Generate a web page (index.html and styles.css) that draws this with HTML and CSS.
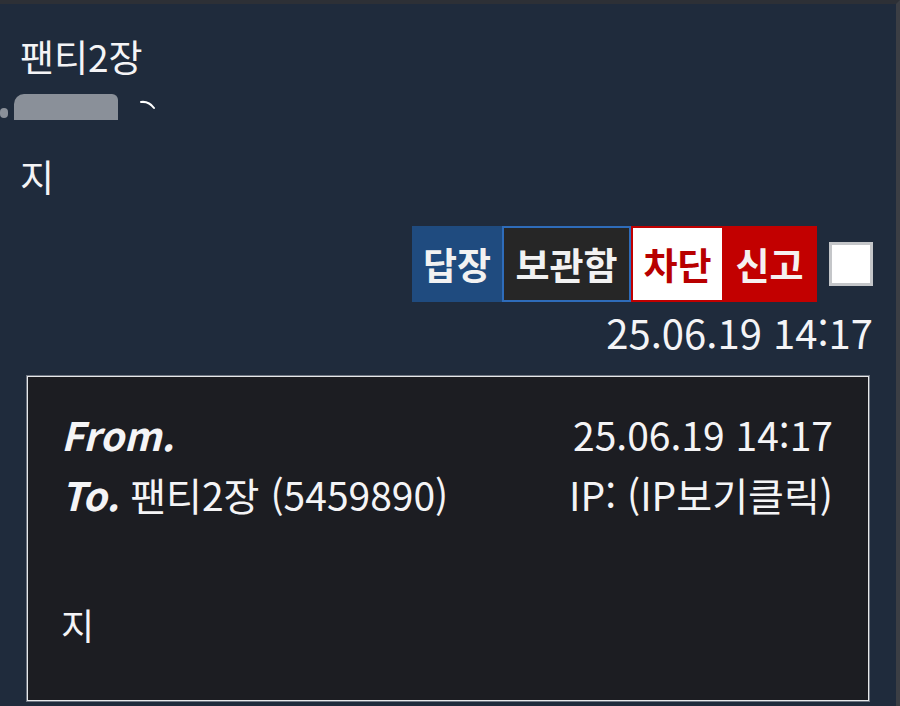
FILE: index.html
```html
<!DOCTYPE html>
<html lang="ko">
<head>
<meta charset="utf-8">
<link rel="stylesheet" href="styles.css">
</head>
<body>
<div class="page">
  <div class="title">팬티2장</div>
  <div class="author">
    <span class="dot"></span>
    <span class="blob"></span>
    <svg class="tick" width="16" height="10" viewBox="0 0 16 10"><path d="M1 2 Q9 1 14 8" stroke="#ffffff" stroke-width="2" fill="none" stroke-linecap="round"/></svg>
  </div>
  <div class="body-text">지</div>
  <div class="actions">
    <span class="btn btn-reply">답장</span>
    <span class="btn btn-save">보관함</span>
    <span class="btn btn-block">차단</span>
    <span class="btn btn-report">신고</span>
    <span class="check"></span>
  </div>
  <div class="date">25.06.19 14:17</div>
  <div class="letter">
    <div class="row">
      <span><b class="lbl">From.</b></span>
      <span>25.06.19 14:17</span>
    </div>
    <div class="row">
      <span><b class="lbl">To.</b> 팬티2장 (5459890)</span>
      <span>IP: (IP보기클릭)</span>
    </div>
    <div class="letter-body">지</div>
  </div>
</div>
</body>
</html>
```

FILE: styles.css
```css
html, body {
  margin: 0;
  padding: 0;
  height: 100%;
}
body {
  background: #1f2b3c;
  font-family: "Noto Sans CJK KR", "Noto Sans", sans-serif;
  color: #f4f4f6;
  border-top: 4px solid #2d3036;
  border-right: 4px solid #3b3e44;
  box-sizing: border-box;
  overflow: hidden;
}
.page {
  display: flex;
  flex-direction: column;
  padding: 0 23px 0 20px;
}
.title {
  font-size: 37px;
  line-height: 40px;
  margin-top: 32px;
}
.author {
  display: flex;
  align-items: flex-end;
  height: 30px;
  margin-left: -20px;
  margin-top: 14px;
}
.dot {
  width: 8px;
  height: 10px;
  border-radius: 5px;
  background: #8a9099;
  margin-bottom: 2px;
}
.blob {
  width: 104px;
  height: 26px;
  margin-left: 6px;
  background: #8a9099;
  border-radius: 10px 6px 0 0;
}
.tick {
  margin-left: 22px;
  align-self: center;
}
.body-text {
  font-size: 37px;
  line-height: 40px;
  margin-top: 36px;
}
.actions {
  display: flex;
  justify-content: flex-end;
  align-items: center;
  margin-top: 30px;
}
.btn {
  font-weight: 700;
  font-size: 37px;
  height: 76px;
  display: flex;
  align-items: center;
  justify-content: center;
  box-sizing: border-box;
  padding: 0 4px;
}
.btn-reply {
  background: #1f4b7f;
  color: #f2f2f2;
  width: 90px;
}
.btn-save {
  background: #262626;
  color: #f2f2f2;
  border: 2px solid #2e6cba;
  width: 129px;
}
.btn-block {
  background: #ffffff;
  color: #b80000;
  border: 2px solid #c00000;
  border-right: none;
  width: 91px;
}
.btn-report {
  background: #c20000;
  color: #f5f0f0;
  width: 95px;
}
.check {
  width: 44px;
  height: 44px;
  box-sizing: border-box;
  background: #ffffff;
  border: 3px solid #c4c6c9;
  margin-left: 12px;
}
.date {
  text-align: right;
  font-size: 40px;
  line-height: 44px;
  margin-top: 8px;
}
.letter {
  margin: 22px 4px 0 7px;
  background: #1c1d22;
  border: 1px solid #e6e8ea;
  box-shadow: 0 0 0 1px #6f7682;
  height: 325px;
  box-sizing: border-box;
  padding: 27px 35px 0 33px;
  display: flex;
  flex-direction: column;
}
.row {
  display: flex;
  justify-content: space-between;
  font-size: 39px;
  line-height: 60px;
}
.lbl {
  font-style: italic;
  font-weight: 700;
}
.letter-body {
  font-size: 36px;
  line-height: 40px;
  margin-top: 80px;
}
```
